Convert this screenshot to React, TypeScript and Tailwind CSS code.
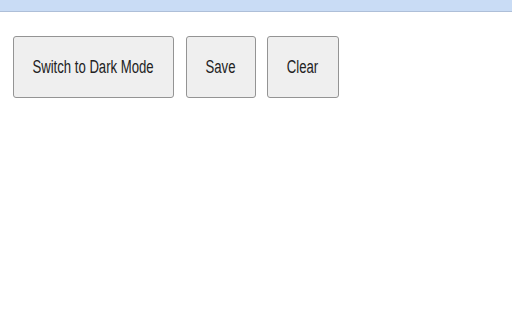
export default function App() {
  const buttons = [
    { label: 'Switch to Dark Mode', width: 'w-[161px]' },
    { label: 'Save', width: 'w-[70px]' },
    { label: 'Clear', width: 'w-[72px]' },
  ];

  return (
    <div className="min-h-[320px] w-full bg-white font-['Liberation_Sans',Arial,sans-serif]">
      {/* Top bar */}
      <div className="h-[12px] bg-[#c9dcf5] border-b border-[#aebfd8]"></div>

      {/* Toolbar */}
      <div className="flex items-start pl-[13px] pt-[24px]">
        <div className="flex gap-[11.5px]">
          {buttons.map((b) => (
            <button
              key={b.label}
              className={`${b.width} h-[62px] flex items-center justify-center rounded-[3px] border border-[#949494] bg-[#efefef] text-[#222222]`}
            >
              <span className="inline-block whitespace-nowrap text-[18px] leading-none scale-x-[0.73]">
                {b.label}
              </span>
            </button>
          ))}
        </div>
      </div>
    </div>
  );
}
